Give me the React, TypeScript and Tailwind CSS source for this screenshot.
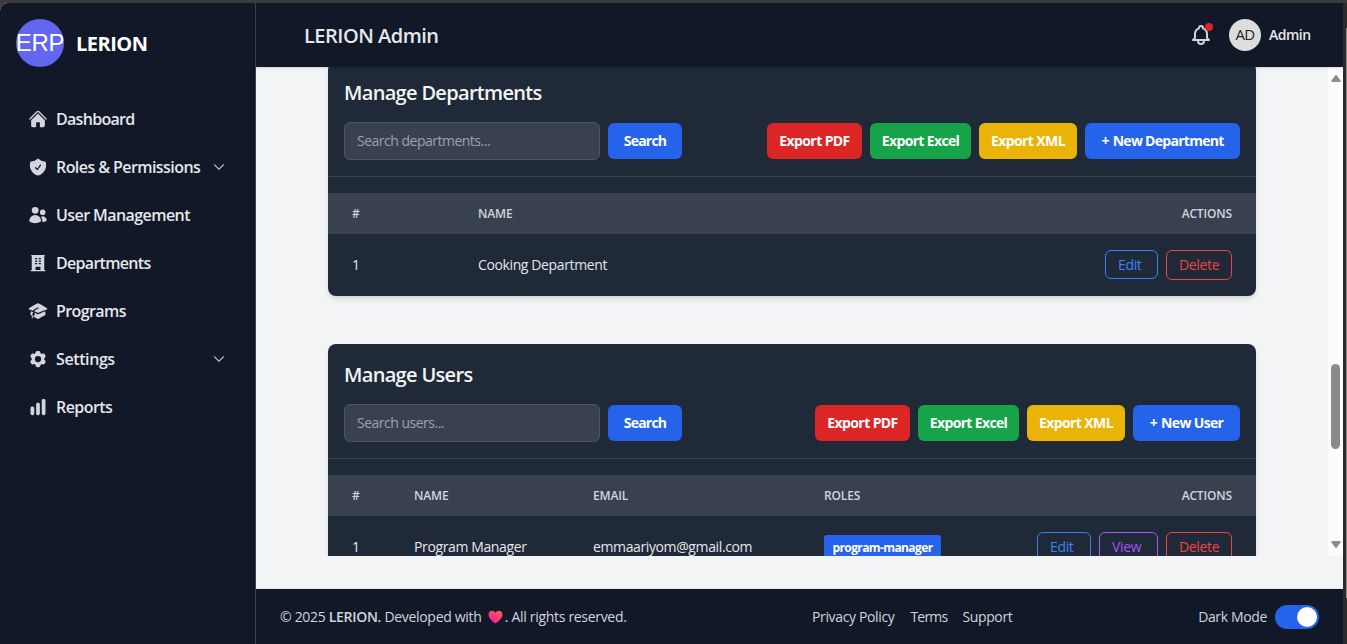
import type { ReactNode } from "react";
import {
  HiHome,
  HiShieldCheck,
  HiUsers,
  HiBuildingOffice,
  HiAcademicCap,
  HiCog6Tooth,
  HiChartBar,
} from "react-icons/hi2";
import { HiOutlineBell } from "react-icons/hi";
import { BsChevronDown } from "react-icons/bs";

const navItems: { label: string; icon: ReactNode; track: string; expandable?: boolean }[] = [
  { label: "Dashboard", icon: <HiHome />, track: "tracking-[-0.7px]" },
  { label: "Roles & Permissions", icon: <HiShieldCheck />, track: "tracking-[-0.57px]", expandable: true },
  { label: "User Management", icon: <HiUsers />, track: "tracking-[-0.57px]" },
  { label: "Departments", icon: <HiBuildingOffice />, track: "tracking-[-0.7px]" },
  { label: "Programs", icon: <HiAcademicCap />, track: "tracking-[-0.6px]" },
  { label: "Settings", icon: <HiCog6Tooth />, track: "tracking-[-0.4px]", expandable: true },
  { label: "Reports", icon: <HiChartBar />, track: "tracking-[-0.55px]" },
];

function Sidebar() {
  return (
    <aside className="flex w-64 shrink-0 flex-col border-r border-[#394150] bg-[#111827]">
      <div className="flex items-center gap-3 px-4 pt-4">
        <div className="flex size-12 shrink-0 items-center justify-center overflow-hidden rounded-full bg-[#6366f1] font-['Liberation_Sans'] text-[24px] leading-none text-white">
          <span className="whitespace-nowrap tracking-[-0.3px]">ERP</span>
        </div>
        <span className="pt-0.5 text-xl font-bold tracking-[-0.5px] text-white">LERION</span>
      </div>
      <nav className="mt-8 flex flex-col gap-2 px-4">
        {navItems.map((item) => (
          <a key={item.label} className="flex h-10 items-center gap-2 px-3 text-gray-300">
            <span className="text-[20px]">{item.icon}</span>
            <span className={"whitespace-nowrap text-base font-semibold text-gray-200 " + item.track}>{item.label}</span>
            {item.expandable && (
              <BsChevronDown className="ml-auto mr-[2px] size-3 shrink-0 [stroke-width:0.6]" stroke="currentColor" />
            )}
          </a>
        ))}
      </nav>
    </aside>
  );
}

function Header() {
  return (
    <header className="z-10 flex h-16 shrink-0 items-center justify-between bg-[#111827] pl-12 pr-8 shadow-sm">
      <h1 className="pt-0.5 text-xl font-semibold tracking-[-0.5px] text-gray-200">LERION Admin</h1>
      <div className="flex items-center">
        <div className="relative text-gray-300">
          <HiOutlineBell className="size-6" />
          <span className="absolute right-0 top-0 size-2 rounded-full bg-[#dc2626]" />
        </div>
        <div className="ml-4 flex size-8 items-center justify-center rounded-full bg-[#dddddd] pb-px text-[15px] tracking-[-0.8px] text-[#222222]">
          AD
        </div>
        <span className="ml-2 w-[42px] whitespace-nowrap text-sm font-semibold tracking-[-0.5px] text-gray-200">Admin</span>
      </div>
    </header>
  );
}

function SolidButton({ className, children }: { className: string; children: ReactNode }) {
  return (
    <button
      className={"flex h-9 items-center justify-center whitespace-nowrap rounded-md text-sm font-bold text-white " + className}
    >
      {children}
    </button>
  );
}

function OutlineButton({ className, children }: { className: string; children: ReactNode }) {
  return (
    <button className={"flex items-center rounded-md border pl-3 text-sm tracking-[-0.35px] " + className}>{children}</button>
  );
}

function Card({
  title,
  placeholder,
  newButton,
  children,
}: {
  title: string;
  placeholder: string;
  newButton: ReactNode;
  children: ReactNode;
}) {
  return (
    <section className="shrink-0 overflow-hidden rounded-lg bg-[#1f2937] shadow-md">
      <div className="border-b border-[#394150] p-4">
        <h2 className="h-7 pt-px text-xl font-semibold tracking-[-0.68px] text-gray-100">{title}</h2>
        <div className="mt-4 flex items-center justify-between">
          <div className="flex items-center gap-2">
            <input
              placeholder={placeholder}
              className="h-[38px] w-64 rounded-md border border-[#4b5563] bg-[#394150] px-3 pb-0.5 text-sm tracking-[-0.5px] text-gray-100 placeholder:text-gray-400"
            />
            <SolidButton className="w-[74px] bg-[#2563eb] tracking-[-0.8px]">Search</SolidButton>
          </div>
          <div className="flex items-center gap-2">
            <SolidButton className="w-[95px] bg-[#dc2626] tracking-[-0.6px]">Export PDF</SolidButton>
            <SolidButton className="w-[101px] bg-[#16a34a] tracking-[-0.65px]">Export Excel</SolidButton>
            <SolidButton className="w-[98px] bg-[#eab308] tracking-[-0.6px]">Export XML</SolidButton>
            {newButton}
          </div>
        </div>
      </div>
      <table className="mt-4 w-full table-fixed text-left text-sm text-gray-200">{children}</table>
    </section>
  );
}

const headRow = "h-[41px] bg-[#394150] text-xs text-gray-300";
const th = "px-6 font-semibold tracking-[-0.15px]";
const td = "px-6 py-4 whitespace-nowrap tracking-[-0.38px]";

export default function App() {
  return (
    <div className="flex h-[644px] w-[1347px] overflow-hidden bg-[#3b3b3b] pt-[3px] font-['Open_Sans',sans-serif]">
      <div className="flex w-[1343px] shrink-0 overflow-hidden rounded-tl-lg bg-gray-100">
        <Sidebar />
        <div className="flex min-w-0 flex-1 flex-col">
          <Header />
          <div className="flex h-[489px] shrink-0 overflow-hidden">
            <main className="-mt-[5px] flex min-w-0 flex-1 flex-col gap-12 px-[72px]">
              <Card
                title="Manage Departments"
                placeholder="Search departments..."
                newButton={
                  <SolidButton className="w-[155px] bg-[#2563eb] tracking-[-0.72px]">
                    <span className="mr-1">+</span>New Department
                  </SolidButton>
                }
              >
                <colgroup>
                  <col className="w-[126px]" />
                  <col />
                  <col className="w-[260px]" />
                </colgroup>
                <thead>
                  <tr className={headRow}>
                    <th className={th}>#</th>
                    <th className={th}>NAME</th>
                    <th className={th + " text-right"}>ACTIONS</th>
                  </tr>
                </thead>
                <tbody>
                  <tr>
                    <td className={td}>1</td>
                    <td className={td}>Cooking Department</td>
                    <td className={td}>
                      <div className="flex h-[30px] items-start justify-end gap-2">
                        <OutlineButton className="h-[29px] w-[53px] border-[#3b82f6] text-[#3b82f6]">Edit</OutlineButton>
                        <OutlineButton className="h-[30px] w-[66px] border-[#ef4444] text-[#ef4444]">Delete</OutlineButton>
                      </div>
                    </td>
                  </tr>
                </tbody>
              </Card>
              <Card
                title="Manage Users"
                placeholder="Search users..."
                newButton={
                  <SolidButton className="w-[107px] bg-[#2563eb] tracking-[-0.65px]">
                    <span className="mr-1">+</span>New User
                  </SolidButton>
                }
              >
                <colgroup>
                  <col className="w-[62px]" />
                  <col className="w-[179px]" />
                  <col className="w-[231px]" />
                  <col />
                  <col className="w-[260px]" />
                </colgroup>
                <thead>
                  <tr className={headRow}>
                    <th className={th}>#</th>
                    <th className={th}>NAME</th>
                    <th className={th}>EMAIL</th>
                    <th className={th}>ROLES</th>
                    <th className={th + " text-right"}>ACTIONS</th>
                  </tr>
                </thead>
                <tbody>
                  <tr>
                    <td className={td}>1</td>
                    <td className={td}>Program Manager</td>
                    <td className={td}>emmaariyom@gmail.com</td>
                    <td className={td}>
                      <span className="flex h-6 w-[117px] items-center justify-center rounded-[3px] bg-[#2563eb] pt-0.5 text-xs font-bold tracking-[-0.6px] text-white">
                        program-manager
                      </span>
                    </td>
                    <td className={td}>
                      <div className="flex h-[30px] items-start justify-end gap-2">
                        <OutlineButton className="h-[30px] w-[54px] border-[#3b82f6] text-[#3b82f6]">Edit</OutlineButton>
                        <OutlineButton className="h-[30px] w-[59px] border-[#a855f7] text-[#a855f7]">View</OutlineButton>
                        <OutlineButton className="h-[30px] w-[66px] border-[#ef4444] text-[#ef4444]">Delete</OutlineButton>
                      </div>
                    </td>
                  </tr>
                </tbody>
              </Card>
            </main>
            <div className="flex w-[15px] shrink-0 flex-col items-center justify-between bg-[#fcfcfc] py-2">
              <svg width="10" height="7" viewBox="0 0 10 7" className="fill-[#8b8b8b]">
                <path d="M4.2.5a1 1 0 0 1 1.6 0L9.5 5.6A.9.9 0 0 1 8.8 7H1.2A.9.9 0 0 1 .5 5.6Z" />
              </svg>
              <div className="mt-[190px] h-[85px] w-[9px] rounded-full bg-[#8b8b8b]" />
              <svg width="10" height="7" viewBox="0 0 10 7" className="fill-[#8b8b8b]">
                <path d="M4.2 6.5a1 1 0 0 0 1.6 0L9.5 1.4A.9.9 0 0 0 8.8 0H1.2A.9.9 0 0 0 .5 1.4Z" />
              </svg>
            </div>
          </div>
          <footer className="mt-auto flex h-[56px] items-center justify-between border-t border-gray-200 bg-[#111827] px-6 text-sm tracking-[-0.36px] text-gray-300">
            <p className="flex w-[532px] items-center whitespace-pre tracking-[-0.31px]">
              © 2025 <span className="font-semibold">LERION.</span> Developed with{" "}
              <svg width="15" height="14" viewBox="0 0 15 14" className="ml-[3px] mr-0.5">
                <defs>
                  <linearGradient id="heart" x1="0.8" y1="0" x2="0.3" y2="1">
                    <stop offset="0" stopColor="#ff5a4a" />
                    <stop offset="1" stopColor="#f71fa3" />
                  </linearGradient>
                </defs>
                <path
                  fill="url(#heart)"
                  d="M7.5 13.5C4.5 11.3.5 8 .5 4.4.5 2.2 2.1.7 4.1.7c1.5 0 2.7.8 3.4 2.1C8.2 1.5 9.4.7 10.9.7c2 0 3.6 1.5 3.6 3.7 0 3.6-4 6.9-7 9.1Z"
                />
              </svg>
              . All rights reserved.
            </p>
            <div className="flex flex-1 gap-4">
              <a>Privacy Policy</a>
              <a className="w-9 whitespace-nowrap tracking-[-0.8px]">Terms</a>
              <a>Support</a>
            </div>
            <div className="flex items-center gap-2">
              <span>Dark Mode</span>
              <span className="flex h-6 w-11 items-center justify-end rounded-full bg-[#2563eb] px-0.5">
                <span className="size-5 rounded-full bg-white" />
              </span>
            </div>
          </footer>
        </div>
      </div>
      <div className="flex w-1 shrink-0 justify-end bg-[#2c2c2c]">
        <span className="mt-[25px] h-[570px] w-px bg-[#8b8b8b]" />
      </div>
    </div>
  );
}
